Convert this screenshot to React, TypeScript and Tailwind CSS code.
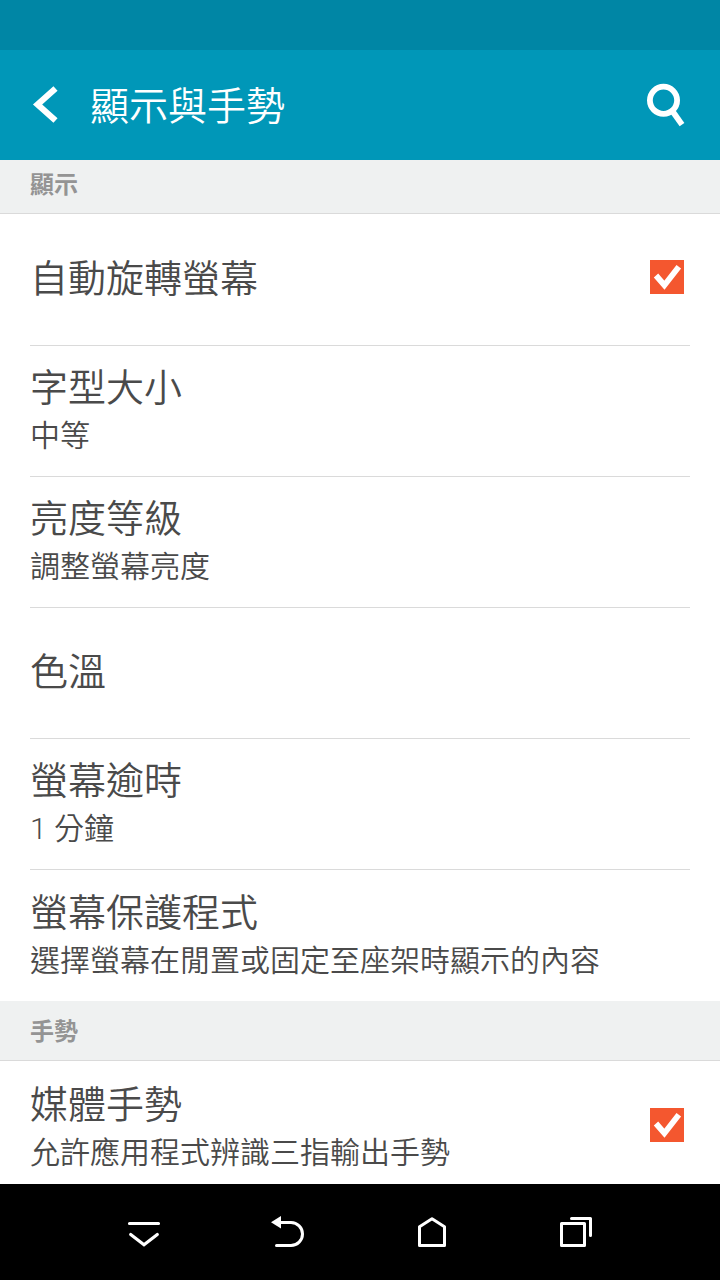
import React, { useState } from 'react';

type Setting = {
    id: string;
    title: string;
    summary?: string;
    checkbox?: boolean;
};

const displaySettings: Setting[] = [
    { id: 'rotate', title: '自動旋轉螢幕', checkbox: true },
    { id: 'font-size', title: '字型大小', summary: '中等' },
    { id: 'brightness', title: '亮度等級', summary: '調整螢幕亮度' },
    { id: 'color-temp', title: '色溫' },
    { id: 'timeout', title: '螢幕逾時', summary: '1 分鐘' },
    { id: 'daydream', title: '螢幕保護程式', summary: '選擇螢幕在閒置或固定至座架時顯示的內容' },
];

const gestureSettings: Setting[] = [
    { id: 'media', title: '媒體手勢', summary: '允許應用程式辨識三指輸出手勢', checkbox: true },
];

function SettingText({ title, summary }: { title: string; summary?: string }) {
    return (
        <span className="flex flex-col font-[350]">
            <span className="text-[38px] leading-[52px]">{title}</span>
            {summary && <span className="text-3xl leading-[44px]">{summary}</span>}
        </span>
    );
}

function CheckRow({ item }: { item: Setting }) {
    const [checked, setChecked] = useState(true);
    return (
        <label htmlFor={item.id} className="flex flex-1 items-center justify-between pr-1.5 pb-0.5">
            <SettingText title={item.title} summary={item.summary} />
            <span className="relative mb-1 size-[34px] shrink-0">
                <input
                    id={item.id}
                    type="checkbox"
                    checked={checked}
                    onChange={(e) => setChecked(e.target.checked)}
                    className="peer block size-full appearance-none border-2 border-[#a0a0a0] checked:border-0 checked:bg-[#f4572f]"
                />
                <svg viewBox="0 0 34 34" className="pointer-events-none absolute inset-0 hidden peer-checked:block" fill="none" stroke="#fff" strokeWidth="5.8" aria-hidden="true">
                    <path d="M6 15.5 14.4 25.2 28.8 6.8" />
                </svg>
            </span>
        </label>
    );
}

function SettingList({ items }: { items: Setting[] }) {
    return (
        <ul className="mx-[30px] divide-y divide-[#dadada] pt-px">
            {items.map((item) => (
                <li key={item.id} className="flex min-h-[131px]">
                    {item.checkbox ? (
                        <CheckRow item={item} />
                    ) : (
                        <button type="button" className="flex flex-1 items-center pb-0.5 text-left">
                            <SettingText title={item.title} summary={item.summary} />
                        </button>
                    )}
                </li>
            ))}
        </ul>
    );
}

export default function App() {
    return (
        <div className="flex h-screen flex-col bg-white font-['Roboto','Noto_Sans_CJK_TC',sans-serif] text-[#4a4a4a]" lang="zh-Hant">
            <div className="h-[50px] shrink-0 bg-[#0086a5]" />
            <header className="flex h-[110px] shrink-0 items-center gap-3 bg-[#0097b8] px-[30px] text-white">
                <button type="button" aria-label="返回">
                    <svg viewBox="0 0 48 48" className="size-12" fill="none" stroke="currentColor" strokeWidth="6.2">
                        <path d="M25.5 7.5 7.6 23.5l17.9 16" />
                    </svg>
                </button>
                <h1 className="flex-1 pt-1 text-[39px] leading-[56px] font-[350]">顯示與手勢</h1>
                <button type="button" aria-label="搜尋">
                    <svg viewBox="0 0 48 48" className="size-12" fill="none" stroke="currentColor" strokeWidth="5.8">
                        <circle cx="21.5" cy="19.3" r="13.6" />
                        <path d="m30 29.5 10 14.2" />
                    </svg>
                </button>
            </header>

            <main className="min-h-0 flex-1 overflow-y-auto [scrollbar-width:none]">
                <section>
                    <h2 className="border-b border-[#dadada] bg-[#eff1f1] px-[30px] pt-[7px] pb-2.5 text-2xl leading-9 font-bold text-[#949494]">顯示</h2>
                    <SettingList items={displaySettings} />
                </section>
                <section>
                    <h2 className="border-b border-[#dadada] bg-[#eff1f1] px-[30px] pt-[13px] pb-2.5 text-2xl leading-9 font-bold text-[#949494]">手勢</h2>
                    <SettingList items={gestureSettings} />
                </section>
            </main>

            <nav className="flex h-24 shrink-0 items-center bg-black px-[10%] text-white">
                <button type="button" aria-label="隱藏導覽列" className="flex flex-1 justify-center">
                    <svg viewBox="0 0 48 48" className="size-12" fill="none" stroke="currentColor" strokeWidth="3.2" strokeLinecap="round">
                        <path d="M9.5 15.5h29M10.7 26.5 24 36.7l13.3-10.2" />
                    </svg>
                </button>
                <button type="button" aria-label="上一頁" className="flex flex-1 justify-center">
                    <svg viewBox="0 0 48 48" className="size-12" fill="none" stroke="currentColor" strokeWidth="3" strokeLinecap="round">
                        <path d="M16 14.5h11a11.5 11.5 0 0 1 0 23H12.5" />
                        <path d="M7 14.3 17 8v12.4z" fill="currentColor" stroke="none" />
                    </svg>
                </button>
                <button type="button" aria-label="主畫面" className="flex flex-1 justify-center">
                    <svg viewBox="0 0 48 48" className="size-12" fill="none" stroke="currentColor" strokeWidth="3" strokeLinejoin="round">
                        <path d="M11.5 18.8 24 10.8l12.5 8v18.7h-25z" />
                    </svg>
                </button>
                <button type="button" aria-label="最近使用的應用程式" className="flex flex-1 justify-center">
                    <svg viewBox="0 0 48 48" className="size-12" fill="none" stroke="currentColor" strokeWidth="3" strokeLinecap="round" strokeLinejoin="round">
                        <rect x="9.5" y="15.5" width="23" height="22" />
                        <path d="M19.5 10.5h19v17" />
                    </svg>
                </button>
            </nav>
        </div>
    );
}
